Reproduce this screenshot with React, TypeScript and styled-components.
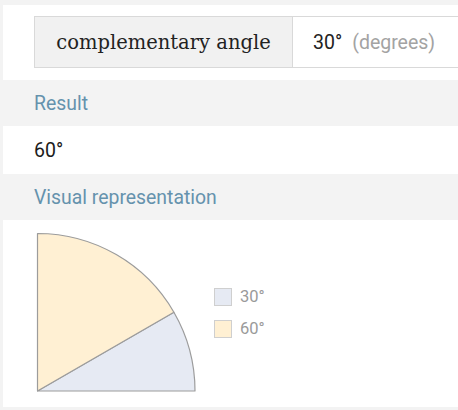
import * as React from 'react';
import {createGlobalStyle, styled} from 'styled-components';

const GlobalStyle = createGlobalStyle`
    html, body {
        margin: 0;
        padding: 0;
        background: #f3f3f3;
        overflow: hidden;
    }
`;

const StyledPanel = styled.div`
    margin: 5px 0 0 3px;
    background: #ffffff;
    font-family: Roboto, 'Liberation Sans', sans-serif;
`;

const StyledInputRow = styled.div`
    padding: 11px 0 12px 31px;
`;

const StyledInputTable = styled.div`
    display: flex;
    height: 50px;
    border: 1px solid #d9d9d9;
    border-right: none;
`;

const StyledLabelCell = styled.div`
    width: 257px;
    display: flex;
    align-items: center;
    justify-content: center;
    background: #f1f1f1;
    border-right: 1px solid #d9d9d9;
    font-family: 'DejaVu Serif', 'Liberation Serif', serif;
    font-size: 19.5px;
    color: #222;
`;

const StyledValueCell = styled.div`
    flex: 1;
    display: flex;
    align-items: center;
    padding-left: 20px;
    font-size: 19.5px;
    color: #222;
`;

const StyledUnit = styled.span`
    margin-left: 10px;
    font-size: 19.5px;
    color: #a3a3a3;
`;

const StyledHeader = styled.div`
    height: 46px;
    display: flex;
    align-items: center;
    padding-left: 31px;
    background: #f3f3f3;
    font-size: 19.4px;
    color: #6592ad;
`;

const StyledValue = styled.div`
    height: 48px;
    display: flex;
    align-items: center;
    padding-left: 31px;
    font-size: 19.5px;
    color: #1c1c1c;
`;

const StyledChartRow = styled.div`
    height: 187px;
    display: flex;
    padding: 12px 0 0 33px;
    box-sizing: border-box;
`;

const StyledLegend = styled.div`
    margin: 55px 0 0 13px;
    display: flex;
    flex-direction: column;
    gap: 13px;
`;

const StyledLegendItem = styled.div`
    display: flex;
    align-items: center;
    gap: 8px;
    font-size: 16.5px;
    color: #9a9a9a;
`;

const StyledSwatch = styled.div<{$fill: string}>`
    width: 16px;
    height: 16px;
    background: ${props => props.$fill};
    border: 1px solid #cfcfcf;
`;

const BLUE = '#e6eaf3';
const ORANGE = '#fff0d3';

function QuarterChart() {
    const cx = 1.5;
    const cy = 159;
    const r = 157.5;
    const px = cx + r * Math.cos(Math.PI / 6);
    const py = cy - r * Math.sin(Math.PI / 6);
    return (
        <svg width={165} height={165} viewBox="0 0 165 165">
            <path
                d={`M${cx} ${cy} L${cx + r} ${cy} A${r} ${r} 0 0 0 ${px} ${py} Z`}
                fill={BLUE}
                stroke="#9c9c9c"
                strokeWidth={1.2}
                strokeLinejoin="round"
            />
            <path
                d={`M${cx} ${cy} L${px} ${py} A${r} ${r} 0 0 0 ${cx} ${cy - r} Z`}
                fill={ORANGE}
                stroke="#9c9c9c"
                strokeWidth={1.2}
                strokeLinejoin="round"
            />
        </svg>
    );
}

export default function App() {
    return (
        <React.Fragment>
            <GlobalStyle />
            <StyledPanel>
                <StyledInputRow>
                    <StyledInputTable>
                        <StyledLabelCell>complementary angle</StyledLabelCell>
                        <StyledValueCell>
                            30°<StyledUnit>(degrees)</StyledUnit>
                        </StyledValueCell>
                    </StyledInputTable>
                </StyledInputRow>
                <StyledHeader>Result</StyledHeader>
                <StyledValue>60°</StyledValue>
                <StyledHeader>Visual representation</StyledHeader>
                <StyledChartRow>
                    <QuarterChart />
                    <StyledLegend>
                        <StyledLegendItem>
                            <StyledSwatch $fill={BLUE} />
                            30°
                        </StyledLegendItem>
                        <StyledLegendItem>
                            <StyledSwatch $fill={ORANGE} />
                            60°
                        </StyledLegendItem>
                    </StyledLegend>
                </StyledChartRow>
            </StyledPanel>
        </React.Fragment>
    );
}
